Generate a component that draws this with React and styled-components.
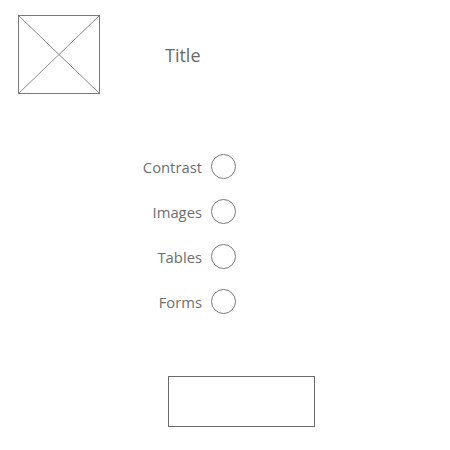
import React from "react";
import styled, { createGlobalStyle } from "styled-components";

const Global = createGlobalStyle`
  html, body { margin: 0; padding: 0; background: #fff; }
  body { font-family: "Open Sans", "Noto Sans", sans-serif; color: #6e6e6e; }
`;

const Page = styled.div`
  width: 450px;
  height: 450px;
  display: flex;
  flex-direction: column;
  box-sizing: border-box;
  padding-top: 15px;
`;

const Header = styled.header`
  display: flex;
  align-items: center;
  gap: 65px;
  padding-left: 18px;
`;

const ImageBox = styled.div`
  width: 82px;
  height: 79px;
  box-sizing: border-box;
  border: 1px solid #7a7a7a;
  display: flex;
`;

const Title = styled.h1`
  margin: 0;
  font-size: 18px;
  font-weight: 400;
  color: #6a6a6a;
  line-height: 1;
`;

const List = styled.div`
  display: flex;
  flex-direction: column;
  gap: 20px;
  margin-top: 60px;
`;

const Row = styled.label`
  display: grid;
  grid-template-columns: 211px 25px 1fr;
  align-items: center;
  height: 25px;
`;

const Label = styled.span`
  justify-self: end;
  padding-right: 9px;
  font-size: 14.8px;
  color: #6e6e6e;
`;

const Circle = styled.span`
  width: 25px;
  height: 25px;
  box-sizing: border-box;
  border: 1px solid #7a7a7a;
  border-radius: 50%;
`;

const Button = styled.button`
  margin: 62px 0 0 168px;
  width: 147px;
  height: 51px;
  box-sizing: border-box;
  border: 1px solid #6b6b6b;
  background: #fff;
  padding: 0;
`;

const items = ["Contrast", "Images", "Tables", "Forms"];

export default function App() {
  return (
    <>
      <Global />
      <Page>
        <Header>
          <ImageBox>
            <svg width="80" height="77" viewBox="0 0 80 77" preserveAspectRatio="none">
              <line x1="0" y1="0" x2="80" y2="77" stroke="#8a8a8a" strokeWidth="1" />
              <line x1="80" y1="0" x2="0" y2="77" stroke="#8a8a8a" strokeWidth="1" />
            </svg>
          </ImageBox>
          <Title>Title</Title>
        </Header>
        <List>
          {items.map((t) => (
            <Row key={t}>
              <Label>{t}</Label>
              <Circle />
            </Row>
          ))}
        </List>
        <Button aria-label="button" />
      </Page>
    </>
  );
}
